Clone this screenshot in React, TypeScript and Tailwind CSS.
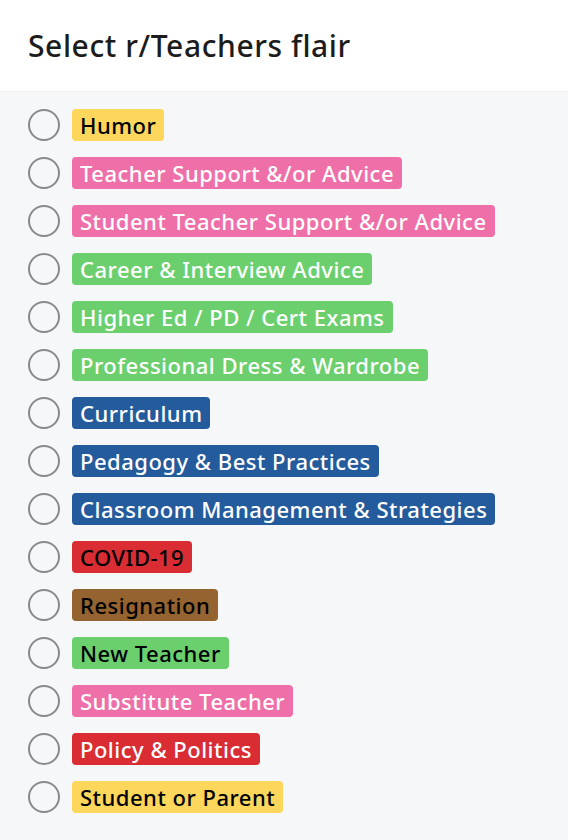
const flairs: { label: string; bg: string; text: string }[] = [
  { label: "Humor", bg: "bg-[#fcd75c]", text: "text-black" },
  { label: "Teacher Support &/or Advice", bg: "bg-[#ef6fa8]", text: "text-white" },
  { label: "Student Teacher Support &/or Advice", bg: "bg-[#ef6fa8]", text: "text-white" },
  { label: "Career & Interview Advice", bg: "bg-[#6bcf6e]", text: "text-white" },
  { label: "Higher Ed / PD / Cert Exams", bg: "bg-[#6bcf6e]", text: "text-white" },
  { label: "Professional Dress & Wardrobe", bg: "bg-[#6bcf6e]", text: "text-white" },
  { label: "Curriculum", bg: "bg-[#245b9c]", text: "text-white" },
  { label: "Pedagogy & Best Practices", bg: "bg-[#245b9c]", text: "text-white" },
  { label: "Classroom Management & Strategies", bg: "bg-[#245b9c]", text: "text-white" },
  { label: "COVID-19", bg: "bg-[#da2c33]", text: "text-black" },
  { label: "Resignation", bg: "bg-[#94632f]", text: "text-black" },
  { label: "New Teacher", bg: "bg-[#6bcf6e]", text: "text-black" },
  { label: "Substitute Teacher", bg: "bg-[#ef6fa8]", text: "text-white" },
  { label: "Policy & Politics", bg: "bg-[#da2c33]", text: "text-white" },
  { label: "Student or Parent", bg: "bg-[#fcd75c]", text: "text-black" },
]

export default function App() {
  return (
    <div className="w-[568px] h-[840px] bg-[#f6f7f8] font-['Noto_Sans',sans-serif] overflow-hidden">
      {/* header */}
      <div className="h-[92px] bg-white border-b border-[#edeff1] flex items-center px-7">
        <h1 className="text-[30px] font-medium text-[#1c1c1c] tracking-[0.6px]">
          Select r/Teachers flair
        </h1>
      </div>

      {/* flair list */}
      <div className="flex flex-col gap-4 pt-[17px] px-7">
        {flairs.map((f) => (
          <label key={f.label} className="flex items-center gap-3 h-8">
            <span className="w-8 h-8 rounded-full border-[2.5px] border-[#878a8c] shrink-0" />
            <span
              className={`h-8 flex items-center px-2 rounded-[4px] text-[22px] font-medium leading-none tracking-[0.5px] ${f.bg} ${f.text}`}
            >
              {f.label}
            </span>
          </label>
        ))}
      </div>
    </div>
  )
}
